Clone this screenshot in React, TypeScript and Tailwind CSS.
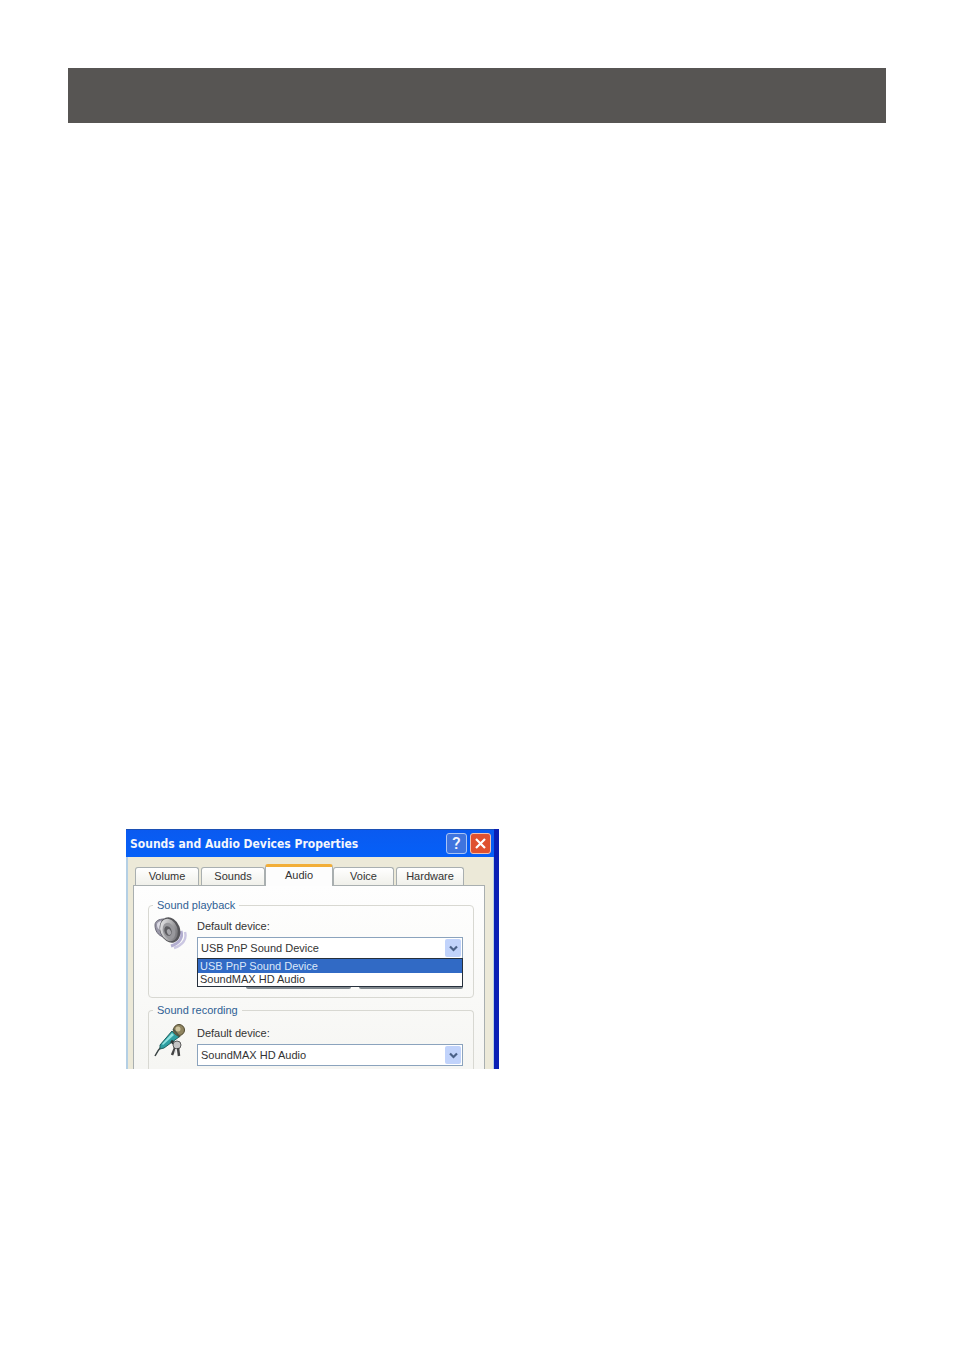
import React from "react";

const TABS = ["Volume", "Sounds", "Audio", "Voice", "Hardware"];
const DEVICES = ["USB PnP Sound Device", "SoundMAX HD Audio"];

function SpeakerIcon() {
  return (
    <svg width="34" height="36" viewBox="0 0 34 36" fill="none" aria-hidden="true">
      <defs>
        <linearGradient id="cone" x1="0" y1="0" x2="1" y2="1">
          <stop offset="0" stopColor="#f4f4f6" />
          <stop offset="0.5" stopColor="#b0b0b2" />
          <stop offset="1" stopColor="#5c5c60" />
        </linearGradient>
      </defs>
      <path d="M28 16c2 6-1 12-10 15" stroke="#b3aed0" strokeWidth="3" />
      <path d="M32 17c2 7-2 13-11 16" stroke="#cbc7e2" strokeWidth="2.5" />
      <path d="M2 10c0-4 4-6 9-6l5 9-6 9C5 20 2 16 2 10z" fill="#9a98a8" stroke="#6b6978" />
      <path d="M4 10c0-3 3-4 5-4l-2 9C5 14 4 12 4 10z" fill="#dddce6" />
      <ellipse cx="17" cy="15" rx="10" ry="13" transform="rotate(-20 17 15)" fill="#56565a" />
      <ellipse cx="16" cy="15" rx="8.5" ry="11.5" transform="rotate(-20 16 15)" fill="url(#cone)" />
      <ellipse cx="16" cy="16" rx="6" ry="8.5" transform="rotate(-20 16 16)" fill="#98989c" />
      <ellipse cx="15" cy="16" rx="3.5" ry="5" transform="rotate(-20 15 16)" fill="#5c5c60" />
      <ellipse cx="16" cy="17" rx="2" ry="3" transform="rotate(-20 16 17)" fill="#a6a6aa" />
    </svg>
  );
}

function MicrophoneIcon() {
  return (
    <svg width="34" height="36" viewBox="0 0 34 36" fill="none" aria-hidden="true">
      <path d="M8 25C5 28 4 30 2 34" stroke="#3a4444" strokeWidth="1.5" />
      <path d="M7 23L19 9l7 6L11 26l-4 1z" fill="#2c9fa2" stroke="#22605f" />
      <path d="M9 22L19 11l2 2-11 10z" fill="#8fe2df" />
      <path d="M18 19l5 4" stroke="#2d3a3a" strokeWidth="3" />
      <circle cx="24" cy="23" r="4" fill="#c4c4c4" stroke="#5b5b5b" />
      <path d="M22 26l-3 7m6-7l1 8" stroke="#444" strokeWidth="2.5" />
      <path d="M23 27l-1 4" stroke="#ddd" strokeWidth="1.5" />
      <circle cx="26" cy="8" r="5.5" fill="#8f8460" stroke="#50492f" />
      <circle cx="25" cy="7" r="2.5" fill="#cfc5a0" />
      <path d="M20 7l7 8" stroke="#4d5848" strokeWidth="1.5" />
    </svg>
  );
}

interface DeviceSelectProps {
  id: string;
  value: string;
  children?: React.ReactNode;
}

function DeviceSelect({ id, value, children }: DeviceSelectProps) {
  return (
    <div className="flex grow flex-col gap-1 pt-2">
      <label htmlFor={id} className="leading-[14px]">
        Default device:
      </label>
      <div className="relative">
        <select
          id={id}
          defaultValue={value}
          className="block h-[22px] w-full appearance-none border border-[#8ba3bd] bg-white pl-[3px] leading-[18px] outline-none"
        >
          {DEVICES.map((device) => (
            <option key={device}>{device}</option>
          ))}
        </select>
        <span className="pointer-events-none absolute top-[2px] right-[2px] flex h-[18px] w-4 items-center justify-center rounded-xs bg-[#c1d3fb]">
          <svg width="9" height="7" viewBox="0 0 9 7" fill="none" aria-hidden="true">
            <path d="M1 1.5l3.5 3.5L8 1.5" stroke="#4a6188" strokeWidth="2.2" />
          </svg>
        </span>
        {children}
      </div>
    </div>
  );
}

interface DeviceGroupProps {
  title: string;
  icon: React.ReactNode;
  className?: string;
  children: React.ReactNode;
}

function DeviceGroup({ title, icon, className = "", children }: DeviceGroupProps) {
  return (
    <fieldset className={`rounded-t-sm border border-[#d8d8d2] pr-[10px] pl-1 ${className}`}>
      <legend className="px-1 leading-3 text-[#2f5f94]">{title}</legend>
      <div className="flex gap-[10px]">
        <div className="shrink-0 pt-1">{icon}</div>
        {children}
      </div>
    </fieldset>
  );
}

export default function App() {
  return (
    <main className="min-h-screen bg-white p-[68px] font-['Liberation_Sans',sans-serif] text-[11px] text-[#333]">
      <header className="h-[55px] bg-[#575553]" />

      <section className="mt-[706px] ml-[58px] max-w-[373px] overflow-hidden border-r-[5px] border-[#0a1fb4] bg-[#ece9d8]">
        <div className="flex h-7 items-center gap-[3px] border-t border-[#1c50b4] bg-linear-to-b from-[#0a5af0] to-[#0560f8] pr-[3px] pl-1 text-[#f4f6fc]">
          <h1 className="grow font-['DejaVu_Sans_Condensed','Open_Sans',sans-serif] text-[12px] font-bold whitespace-nowrap">
            Sounds and Audio Devices Properties
          </h1>
          <button
            aria-label="Help"
            className="flex h-[21px] w-[21px] items-center justify-center rounded-[3px] border border-[#a9c4f5] bg-[#3f74de] font-['Roboto',sans-serif] text-[17px] leading-none font-medium"
          >
            ?
          </button>
          <button
            aria-label="Close"
            className="flex h-[21px] w-[21px] items-center justify-center rounded-[3px] border border-[#f0c0b0] bg-[#df5130]"
          >
            <svg width="13" height="13" viewBox="0 0 13 13" aria-hidden="true">
              <path d="M2 2l9 9M11 2l-9 9" stroke="#fff" strokeWidth="2.2" />
            </svg>
          </button>
        </div>

        <div className="border-r border-l-2 border-[#b4cfe4] pt-[7px] pr-2 pl-[5px]">
          <div role="tablist" className="flex items-end pl-[2px] text-center">
            {TABS.map((tab) =>
              tab === "Audio" ? (
                <button
                  key={tab}
                  role="tab"
                  aria-selected="true"
                  className="relative z-10 -mb-px h-[22px] w-[68px] rounded-t-[3px] border-x border-t-[3px] border-[#a9afb0] border-t-[#f2ae38] bg-[#fdfdfd] pb-1 leading-4"
                >
                  {tab}
                </button>
              ) : (
                <button
                  key={tab}
                  role="tab"
                  aria-selected="false"
                  className="mr-[2px] h-[18px] w-[64px] rounded-t-[3px] border border-b-0 border-[#a9afb0] bg-linear-to-b from-white to-[#f0f0ea] leading-[17px] last:mr-0 last:w-[68px] nth-[2]:mr-0 nth-[4]:w-[61px]"
                >
                  {tab}
                </button>
              ),
            )}
          </div>

          <div
            role="tabpanel"
            className="border border-b-0 border-[#a9afb0] bg-linear-to-b from-[#fefefe] to-[#f6f6f3] pt-[13px] pr-[10px] pl-[14px]"
          >
            <DeviceGroup title="Sound playback" icon={<SpeakerIcon />} className="rounded-b-sm pb-[38px]">
              <DeviceSelect id="playback" value={DEVICES[0]}>
                <div className="absolute inset-x-0 top-[21px]">
                  <ul role="listbox" aria-label="Playback devices" className="border border-[#26303c] bg-white leading-[14px]">
                    <li role="option" aria-selected="true" className="h-[14px] bg-[#316ac5] pl-[2px] text-[#dce8fa]">
                      {DEVICES[0]}
                    </li>
                    <li role="option" aria-selected="false" className="h-[13px] pl-[2px] leading-[13px]">
                      {DEVICES[1]}
                    </li>
                  </ul>
                  <div className="flex gap-2 pl-[49px]">
                    <span className="h-[2px] grow rounded-b-sm bg-[#81898f]" />
                    <span className="h-[2px] grow rounded-b-sm bg-[#81898f]" />
                  </div>
                </div>
              </DeviceSelect>
            </DeviceGroup>

            <DeviceGroup title="Sound recording" icon={<MicrophoneIcon />} className="mt-[6px] border-b-0 pt-[2px] pb-[3px]">
              <DeviceSelect id="recording" value={DEVICES[1]} />
            </DeviceGroup>
          </div>
        </div>
      </section>
    </main>
  );
}
